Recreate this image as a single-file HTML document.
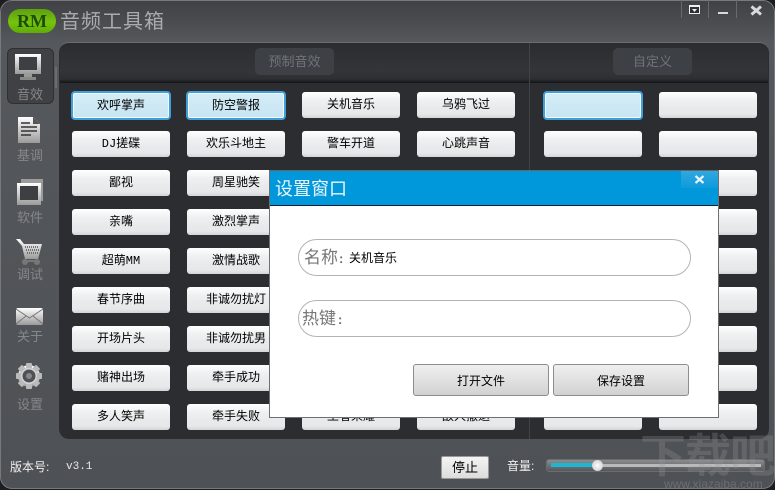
<!DOCTYPE html>
<html><head><meta charset="utf-8">
<style>
html,body{margin:0;padding:0;background:#1c1d1f;}
#w{position:relative;width:775px;height:490px;overflow:hidden;background:#1c1d1f;font-family:"Liberation Sans","WenQuanYi Zen Hei","Noto Sans CJK SC",sans-serif;}
#w div,#w span{position:absolute;box-sizing:border-box;white-space:nowrap;}
.win{left:0;top:0;width:775px;height:489px;border-radius:12px;border:1px solid #77797c;background:linear-gradient(#3f4144 0,#55585c 42px,#4e5155 100%);}
.panel{left:59px;top:42px;width:710px;height:397px;background:#2c2d30;border-radius:10px;border-top:1px solid #6a6c6f;}
.phead{left:60px;top:43px;width:708px;height:40px;background:linear-gradient(#2b2c2f,#333539 70%,#2e2f32 90%,#131416);border-radius:10px 10px 0 0;}
.vl{left:529px;top:43px;width:1px;height:396px;background:#414346;}
.pb{background:#3d4045;border-radius:5px;color:#717378;font-size:13px;text-align:center;height:27px;top:48px;line-height:27px;}
.b{width:98px;height:26px;border-radius:3px;background:linear-gradient(#fff 0,#f0f1f2 30%,#e8eaeb 60%,#e6e8e9 85%,#d3d5d7 100%);color:#000;font-family:"Liberation Mono","WenQuanYi Zen Hei","Noto Sans CJK SC",monospace;font-size:12px;text-align:center;line-height:26px;}
.s{width:100px;height:29px;border-radius:4px;border:2px solid #3f9fd8;background:linear-gradient(#d5edf7,#c6e5f2);box-shadow:inset 0 0 0 1px #f2fafd;color:#000;font-size:12px;text-align:center;line-height:25px;}
.lab{left:8px;width:44px;text-align:center;font-size:13px;color:#85878a;}
.dlg{left:269px;top:170px;width:450px;height:248px;background:#fff;border:1px solid #6d6f72;border-top-color:#666;}
.bar{left:0;top:0;width:448px;height:35px;background:#0098da;border-bottom:1px solid #0a2030;color:#eaf6fc;font-size:18px;line-height:36px;padding-left:5px;}
.inp{left:298px;width:393px;height:37px;border:1px solid #b4b4b4;border-radius:19px;background:#fff;}
.btn{height:32px;width:136px;top:364px;border:1px solid #8d8d8d;border-radius:3px;background:linear-gradient(#efefef,#d2d2d2);font-size:12px;color:#000;text-align:center;line-height:32px;}
</style></head><body>
<div id="w">
<div class="win"></div>

<div style="left:8px;top:9px;width:48px;height:24px;border-radius:12px;background:linear-gradient(#5f9f10,#74c40c 55%,#60ab08);color:#1f4a08;font:bold 18px/24px 'Liberation Serif',serif;text-align:center;">RM</div>
<div style="left:60px;top:9px;font-size:20px;line-height:26px;color:#a9abad;letter-spacing:1px;">音频工具箱</div>

<div style="left:681px;top:0;width:1px;height:18px;background:#67696c"></div>
<div style="left:708px;top:0;width:1px;height:18px;background:#67696c"></div>
<div style="left:736px;top:0;width:1px;height:18px;background:#67696c"></div>
<svg style="position:absolute;left:689px;top:5px" width="11" height="9"><rect x="0" y="0" width="11" height="9" fill="#eee"/><rect x="1" y="2" width="9" height="6" fill="#2d2f32"/><path d="M3 4h5L5.5 7z" fill="#eee"/></svg>
<div style="left:718px;top:12px;width:10px;height:2px;background:#d8d9da"></div>
<svg style="position:absolute;left:750px;top:5px" width="13" height="11"><path d="M1.5 1.5L11 9.5M11 1.5L1.5 9.5" stroke="#d8d9da" stroke-width="3"/></svg>

<div class="panel"></div>
<div class="phead"></div>
<div class="vl"></div>
<div class="pb" style="left:255px;width:79px;">预制音效</div>
<div class="pb" style="left:613px;width:79px;">自定义</div>

<!-- sidebar -->
<div style="left:7px;top:48px;width:47px;height:56px;border-radius:6px;background:#3f4145;border:1px solid #2f3033;"></div>
<div style="left:55px;top:67px;width:2px;height:21px;border:1px solid #6a6c6f;"></div>
<svg style="position:absolute;left:14px;top:53px" width="28" height="28"><defs><linearGradient id="g" x1="0" y1="0" x2="0" y2="1"><stop offset="0" stop-color="#fff"/><stop offset="1" stop-color="#9a9a9a"/></linearGradient></defs><rect x="1" y="1" width="26" height="20" fill="url(#g)"/><rect x="5" y="4" width="18" height="13" fill="#3d3f43"/><rect x="10" y="21" width="8" height="3" fill="#999"/><rect x="6" y="24" width="16" height="3" fill="#888"/></svg>
<div class="lab" style="top:84px;">音效</div>
<svg style="position:absolute;left:17px;top:116px" width="24" height="28"><path d="M1 1H16L23 8V27H1z" fill="url(#g)"/><path d="M16 1L23 8H16z" fill="#555"/><path d="M4 7H13M4 11H20M4 15H20M4 19H14" stroke="#333" stroke-width="1.4"/></svg>
<div class="lab" style="top:145px;">基调</div>
<svg style="position:absolute;left:16px;top:178px" width="28" height="28"><path d="M5 1H27V23H23V5H5z" fill="#9b9b9b"/><rect x="1" y="5" width="24" height="22" fill="url(#g)"/><rect x="4" y="8" width="18" height="14" fill="#3d3f43"/></svg>
<div class="lab" style="top:207px;">软件</div>
<svg style="position:absolute;left:15px;top:238px" width="28" height="28"><path d="M1 1H5L9 6H27L23 21H10L7 8z" fill="url(#g)"/><path d="M10 9H24M11 12H24M12 15H23" stroke="#555" stroke-width="1.5" stroke-dasharray="1 1"/><rect x="9" y="22" width="14" height="2" fill="#777"/><circle cx="10" cy="24" r="3" fill="#777"/><circle cx="22" cy="24" r="3" fill="#777"/></svg>
<div class="lab" style="top:264px;">调试</div>
<svg style="position:absolute;left:16px;top:308px" width="27" height="17"><rect x="0" y="0" width="27" height="17" rx="2" fill="url(#g)"/><path d="M0 1L13.5 10L27 1M0 16L10 8M27 16L17 8" stroke="#777" stroke-width="1" fill="none"/></svg>
<div class="lab" style="top:326px;">关于</div>
<svg style="position:absolute;left:15px;top:362px" width="28" height="28"><g fill="url(#g)"><circle cx="14" cy="14" r="11"/><g fill="#bbb"><rect x="11" y="1" width="6" height="26" rx="1"/><rect x="11" y="1" width="6" height="26" rx="1" transform="rotate(45 14 14)"/><rect x="11" y="1" width="6" height="26" rx="1" transform="rotate(90 14 14)"/><rect x="11" y="1" width="6" height="26" rx="1" transform="rotate(135 14 14)"/></g></g><circle cx="14" cy="14" r="8" fill="#d5d5d5"/><circle cx="14" cy="14" r="6.5" fill="#4e5155"/><circle cx="14" cy="14" r="3" fill="#85878a"/></svg>
<div class="lab" style="top:394px;">设置</div>

<!-- col 1 -->
<div class="s" style="left:71px;top:91px;">欢呼掌声</div>
<div class="b" style="left:72px;top:131px;">DJ搓碟</div>
<div class="b" style="left:72px;top:170px;">鄙视</div>
<div class="b" style="left:72px;top:209px;">亲嘴</div>
<div class="b" style="left:72px;top:248px;">超萌MM</div>
<div class="b" style="left:72px;top:287px;">春节序曲</div>
<div class="b" style="left:72px;top:326px;">开场片头</div>
<div class="b" style="left:72px;top:365px;">赌神出场</div>
<div class="b" style="left:72px;top:404px;">多人笑声</div>
<!-- col 2 -->
<div class="s" style="left:186px;top:91px;">防空警报</div>
<div class="b" style="left:187px;top:131px;">欢乐斗地主</div>
<div class="b" style="left:187px;top:170px;">周星驰笑</div>
<div class="b" style="left:187px;top:209px;">激烈掌声</div>
<div class="b" style="left:187px;top:248px;">激情战歌</div>
<div class="b" style="left:187px;top:287px;">非诚勿扰灯</div>
<div class="b" style="left:187px;top:326px;">非诚勿扰男</div>
<div class="b" style="left:187px;top:365px;">牵手成功</div>
<div class="b" style="left:187px;top:404px;">牵手失败</div>
<!-- col 3 -->
<div class="b" style="left:302px;top:92px;">关机音乐</div>
<div class="b" style="left:302px;top:131px;">警车开道</div>
<div class="b" style="left:302px;top:404px;">王者荣耀</div>
<!-- col 4 -->
<div class="b" style="left:417px;top:92px;">乌鸦飞过</div>
<div class="b" style="left:417px;top:131px;">心跳声音</div>
<div class="b" style="left:417px;top:404px;">敌人撤退</div>
<!-- col 5 -->
<div class="s" style="left:543px;top:91px;"></div>
<div class="b" style="left:544px;top:131px;"></div>
<div class="b" style="left:544px;top:404px;"></div>
<!-- col 6 -->
<div class="b" style="left:659px;top:92px;"></div>
<div class="b" style="left:659px;top:131px;"></div>
<div class="b" style="left:659px;top:170px;"></div>
<div class="b" style="left:659px;top:209px;"></div>
<div class="b" style="left:659px;top:248px;"></div>
<div class="b" style="left:659px;top:287px;"></div>
<div class="b" style="left:659px;top:326px;"></div>
<div class="b" style="left:659px;top:365px;"></div>
<div class="b" style="left:659px;top:404px;"></div>

<!-- bottom -->
<div style="left:10px;top:459px;font-size:12px;color:#f0f0f0;line-height:16px;">版本号:</div>
<div style="left:66px;top:459px;font:11px/16px 'Liberation Mono',monospace;color:#e8e8e8;">v3.1</div>
<div style="left:441px;top:456px;width:48px;height:23px;border-radius:2px;border:1px solid #999;background:linear-gradient(#f4f4f4,#dcdcdc);font-size:13px;text-align:center;line-height:21px;color:#000;">停止</div>
<div style="left:507px;top:458px;font-size:12px;color:#f0f0f0;line-height:16px;">音量:</div>
<div style="left:546px;top:459px;width:219px;height:13px;border-radius:3px;background:linear-gradient(#8a8c8e,#55585b);border:1px solid #6a6c6e;"></div>
<div style="left:551px;top:464px;width:210px;height:3px;background:#b9babb;"></div>
<div style="left:551px;top:463px;width:44px;height:4px;background:#1fb6d3;"></div>
<div style="left:592px;top:460px;width:11px;height:11px;border-radius:50%;background:radial-gradient(#fdfdfd,#c4c4c4);"></div>

<!-- watermark -->
<div style="left:640px;top:431px;font-size:46px;line-height:50px;font-weight:bold;color:rgba(150,152,155,.28);letter-spacing:-1px;">下载吧</div>
<div style="left:664px;top:478px;font-size:12px;line-height:12px;color:rgba(150,152,155,.4);">www.xiazaiba.com</div>

<!-- dialog -->
<div class="dlg"><div class="bar">设置窗口</div>
<div style="left:411px;top:0;width:37px;height:17px;background:linear-gradient(#2fa8e0,#0f9bdb);"></div>
<svg style="position:absolute;left:424px;top:4px" width="11" height="9"><path d="M1.5 1L9.5 8M9.5 1L1.5 8" stroke="#e6f4fb" stroke-width="2.2"/></svg>
</div>
<div class="inp" style="top:239px;"></div>
<div class="inp" style="top:300px;"></div>
<div style="left:304px;top:247px;font-size:17px;line-height:22px;color:#777;">名称</div>
<div style="left:339px;top:249px;font-size:13px;line-height:20px;color:#666;font-weight:bold;">:</div>
<div style="left:349px;top:250px;font-size:12px;line-height:16px;color:#000;">关机音乐</div>
<div style="left:302px;top:308px;font-size:17px;line-height:22px;color:#777;">热键</div>
<div style="left:338px;top:310px;font-size:13px;line-height:20px;color:#666;font-weight:bold;">:</div>
<div class="btn" style="left:413px;">打开文件</div>
<div class="btn" style="left:553px;">保存设置</div>
</div>
</body></html>
